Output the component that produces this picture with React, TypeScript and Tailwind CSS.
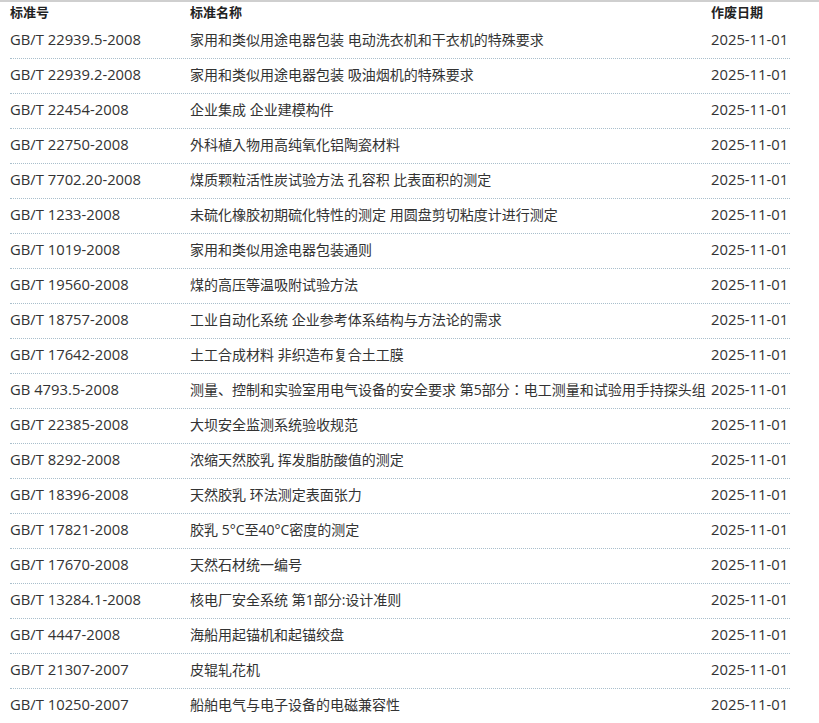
const rows: [string, string][] = [
  ["GB/T 22939.5-2008", "家用和类似用途电器包装 电动洗衣机和干衣机的特殊要求"],
  ["GB/T 22939.2-2008", "家用和类似用途电器包装 吸油烟机的特殊要求"],
  ["GB/T 22454-2008", "企业集成 企业建模构件"],
  ["GB/T 22750-2008", "外科植入物用高纯氧化铝陶瓷材料"],
  ["GB/T 7702.20-2008", "煤质颗粒活性炭试验方法 孔容积 比表面积的测定"],
  ["GB/T 1233-2008", "未硫化橡胶初期硫化特性的测定 用圆盘剪切粘度计进行测定"],
  ["GB/T 1019-2008", "家用和类似用途电器包装通则"],
  ["GB/T 19560-2008", "煤的高压等温吸附试验方法"],
  ["GB/T 18757-2008", "工业自动化系统 企业参考体系结构与方法论的需求"],
  ["GB/T 17642-2008", "土工合成材料 非织造布复合土工膜"],
  ["GB 4793.5-2008", "测量、控制和实验室用电气设备的安全要求 第5部分：电工测量和试验用手持探头组"],
  ["GB/T 22385-2008", "大坝安全监测系统验收规范"],
  ["GB/T 8292-2008", "浓缩天然胶乳 挥发脂肪酸值的测定"],
  ["GB/T 18396-2008", "天然胶乳 环法测定表面张力"],
  ["GB/T 17821-2008", "胶乳 5°C至40°C密度的测定"],
  ["GB/T 17670-2008", "天然石材统一编号"],
  ["GB/T 13284.1-2008", "核电厂安全系统 第1部分:设计准则"],
  ["GB/T 4447-2008", "海船用起锚机和起锚绞盘"],
  ["GB/T 21307-2007", "皮辊轧花机"],
  ["GB/T 10250-2007", "船舶电气与电子设备的电磁兼容性"],
];

export default function App() {
  return (
    <div className="min-h-screen bg-white border-t-2 border-[#cfcfcf] text-[#333] font-['Open_Sans','Noto_Sans_CJK_SC',sans-serif]">
      <div className="ml-[10px] w-[780px]">
        {/* 表头 */}
        <div className="grid grid-cols-[180px_521px_79px] h-[22px] items-center text-[13px] font-bold text-[#222]">
          <span>标准号</span>
          <span>标准名称</span>
          <span>作废日期</span>
        </div>

        {/* 列表 */}
        {rows.map(([code, name]) => (
          <div
            key={code}
            className="grid grid-cols-[180px_521px_79px] h-[35px] pb-[3px] items-center whitespace-nowrap border-b border-dotted border-[#a9bfcc]"
          >
            <span className="text-[14.8px]">{code}</span>
            <span className="text-[14px] font-['Open_Sans','Noto_Sans_CJK_JP',sans-serif]">{name}</span>
            <span className="text-[14.8px]">2025-11-01</span>
          </div>
        ))}
      </div>
    </div>
  );
}
